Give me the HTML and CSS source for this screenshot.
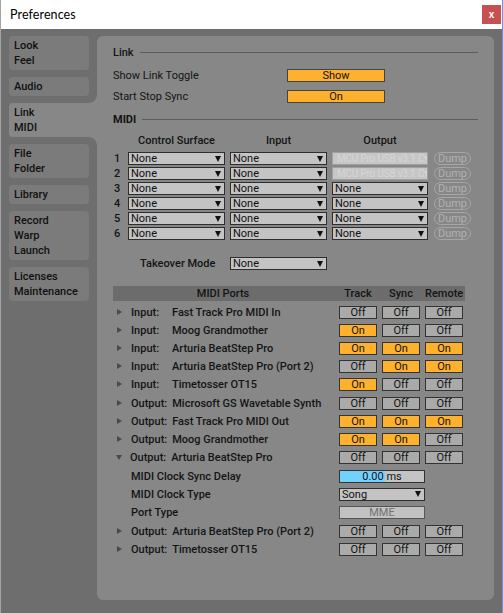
FILE: index.html
```html
<!DOCTYPE html>
<html>
<head>
<meta charset="utf-8">
<title>Preferences</title>
<link rel="stylesheet" href="styles.css">
</head>
<body>
<div class="window">
  <div class="titlebar">
    <span class="title">Preferences</span>
    <span class="close">x</span>
  </div>
  <div class="main">
    <div class="sidebar">
      <div class="tab"><div>Look</div><div>Feel</div></div>
      <div class="tab"><div>Audio</div></div>
      <div class="tab selected"><div>Link</div><div>MIDI</div></div>
      <div class="tab"><div>File</div><div>Folder</div></div>
      <div class="tab"><div>Library</div></div>
      <div class="tab"><div>Record</div><div>Warp</div><div>Launch</div></div>
      <div class="tab"><div>Licenses</div><div>Maintenance</div></div>
    </div>
    <div class="panel">
      <div class="sec-head">Link</div>
      <div class="link-row first">
        <span class="link-label">Show Link Toggle</span>
        <span class="btn on wide">Show</span>
      </div>
      <div class="link-row">
        <span class="link-label">Start Stop Sync</span>
        <span class="btn on wide">On</span>
      </div>
      <div class="sec-head midi-head">MIDI</div>

      <div class="midi-grid heads">
        <span></span>
        <span class="colhead">Control Surface</span>
        <span class="colhead">Input</span>
        <span class="colhead">Output</span>
        <span></span>
      </div>
      <div class="midi-grid row">
        <span class="num">1</span>
        <span class="select"><span>None</span><i class="arrow"></i></span>
        <span class="select"><span>None</span><i class="arrow"></i></span>
        <span class="select disabled"><span>MCU Pro USB v3.1 C</span><i class="arrow"></i></span>
        <span class="dump">Dump</span>
      </div>
      <div class="midi-grid row">
        <span class="num">2</span>
        <span class="select"><span>None</span><i class="arrow"></i></span>
        <span class="select"><span>None</span><i class="arrow"></i></span>
        <span class="select disabled"><span>MCU Pro USB v3.1 C</span><i class="arrow"></i></span>
        <span class="dump">Dump</span>
      </div>
      <div class="midi-grid row">
        <span class="num">3</span>
        <span class="select"><span>None</span><i class="arrow"></i></span>
        <span class="select"><span>None</span><i class="arrow"></i></span>
        <span class="select"><span>None</span><i class="arrow"></i></span>
        <span class="dump">Dump</span>
      </div>
      <div class="midi-grid row">
        <span class="num">4</span>
        <span class="select"><span>None</span><i class="arrow"></i></span>
        <span class="select"><span>None</span><i class="arrow"></i></span>
        <span class="select"><span>None</span><i class="arrow"></i></span>
        <span class="dump">Dump</span>
      </div>
      <div class="midi-grid row">
        <span class="num">5</span>
        <span class="select"><span>None</span><i class="arrow"></i></span>
        <span class="select"><span>None</span><i class="arrow"></i></span>
        <span class="select"><span>None</span><i class="arrow"></i></span>
        <span class="dump">Dump</span>
      </div>
      <div class="midi-grid row">
        <span class="num">6</span>
        <span class="select"><span>None</span><i class="arrow"></i></span>
        <span class="select"><span>None</span><i class="arrow"></i></span>
        <span class="select"><span>None</span><i class="arrow"></i></span>
        <span class="dump">Dump</span>
      </div>

      <div class="midi-grid takeover">
        <span class="takeover-label">Takeover Mode</span>
        <span class="select"><span>None</span><i class="arrow"></i></span>
      </div>

      <div class="ports">
        <div class="ports-grid ports-head">
          <span class="ph-name">MIDI Ports</span>
          <span>Track</span>
          <span>Sync</span>
          <span>Remote</span>
        </div>

        <div class="ports-grid prow first">
          <span class="pname"><i class="tri"></i><span class="plabel">Input:</span>Fast Track Pro MIDI In</span>
          <span class="btn">Off</span><span class="btn">Off</span><span class="btn">Off</span>
        </div>
        <div class="ports-grid prow">
          <span class="pname"><i class="tri"></i><span class="plabel">Input:</span>Moog Grandmother</span>
          <span class="btn on">On</span><span class="btn">Off</span><span class="btn">Off</span>
        </div>
        <div class="ports-grid prow">
          <span class="pname"><i class="tri"></i><span class="plabel">Input:</span>Arturia BeatStep Pro</span>
          <span class="btn on">On</span><span class="btn on">On</span><span class="btn on">On</span>
        </div>
        <div class="ports-grid prow">
          <span class="pname"><i class="tri"></i><span class="plabel">Input:</span>Arturia BeatStep Pro (Port 2)</span>
          <span class="btn">Off</span><span class="btn on">On</span><span class="btn on">On</span>
        </div>
        <div class="ports-grid prow">
          <span class="pname"><i class="tri"></i><span class="plabel">Input:</span>Timetosser OT15</span>
          <span class="btn on">On</span><span class="btn">Off</span><span class="btn">Off</span>
        </div>

        <div class="ports-grid prow gap">
          <span class="pname"><i class="tri"></i><span class="plabel out">Output:</span>Microsoft GS Wavetable Synth</span>
          <span class="btn">Off</span><span class="btn">Off</span><span class="btn">Off</span>
        </div>
        <div class="ports-grid prow">
          <span class="pname"><i class="tri"></i><span class="plabel out">Output:</span>Fast Track Pro MIDI Out</span>
          <span class="btn on">On</span><span class="btn on">On</span><span class="btn on">On</span>
        </div>
        <div class="ports-grid prow">
          <span class="pname"><i class="tri"></i><span class="plabel out">Output:</span>Moog Grandmother</span>
          <span class="btn on">On</span><span class="btn on">On</span><span class="btn">Off</span>
        </div>
        <div class="ports-grid prow">
          <span class="pname"><i class="tri down"></i><span class="plabel out">Output:</span>Arturia BeatStep Pro</span>
          <span class="btn">Off</span><span class="btn">Off</span><span class="btn">Off</span>
        </div>

        <div class="ports-grid prow sub gap">
          <span class="sublabel">MIDI Clock Sync Delay</span>
          <span class="ctl delay">0.00 ms</span>
        </div>
        <div class="ports-grid prow sub">
          <span class="sublabel">MIDI Clock Type</span>
          <span class="ctl select"><span>Song</span><i class="arrow"></i></span>
        </div>
        <div class="ports-grid prow sub">
          <span class="sublabel">Port Type</span>
          <span class="ctl porttype">MME</span>
        </div>

        <div class="ports-grid prow gap">
          <span class="pname"><i class="tri"></i><span class="plabel out">Output:</span>Arturia BeatStep Pro (Port 2)</span>
          <span class="btn">Off</span><span class="btn">Off</span><span class="btn">Off</span>
        </div>
        <div class="ports-grid prow">
          <span class="pname"><i class="tri"></i><span class="plabel out">Output:</span>Timetosser OT15</span>
          <span class="btn">Off</span><span class="btn">Off</span><span class="btn">Off</span>
        </div>
      </div>
    </div>
  </div>
</div>
</body>
</html>
```
FILE: styles.css
```css
* { box-sizing: border-box; }
html, body { margin: 0; padding: 0; }
body {
  width: 503px;
  height: 613px;
  overflow: hidden;
  font-family: Roboto, "Liberation Sans", sans-serif;
  font-size: 11px;
  color: #141414;
}
.window {
  width: 503px;
  height: 613px;
  display: flex;
  flex-direction: column;
  border-left: 1px solid #a3a3a3;
  border-right: 1px solid #8d86c9;
}
.titlebar {
  height: 29px;
  background: #ffffff;
  display: flex;
  align-items: center;
  justify-content: space-between;
  padding-left: 9px;
}
.title {
  font-family: Lato, "Liberation Sans", sans-serif;
  font-size: 12.5px;
  color: #000;
  letter-spacing: 0.1px;
}
.close {
  width: 19px;
  height: 19px;
  margin-right: 1px;
  background: #c75050;
  color: #fff;
  font-family: "Liberation Sans", sans-serif;
  font-weight: bold;
  font-size: 10px;
  display: flex;
  align-items: center;
  justify-content: center;
  padding-bottom: 1px;
}
.main {
  flex: 1;
  background: #6e6e6e;
  display: flex;
  padding: 7px 8px 13px 8px;
}
.sidebar {
  width: 88px;
  display: flex;
  flex-direction: column;
  gap: 7px;
}
.tab {
  width: 80px;
  background: #7b7b7b;
  border-radius: 4px;
  padding: 2px 5px;
  line-height: 15px;
  font-weight: 500;
  color: #111;
}
.tab.selected {
  width: 88px;
  background: #878787;
  border-radius: 4px 0 0 4px;
  position: relative;
}
.tab.selected::before,
.tab.selected::after {
  content: "";
  position: absolute;
  right: 0;
  width: 8px;
  height: 8px;
}
.tab.selected::before {
  top: -8px;
  background: radial-gradient(circle at 0 0, transparent 7.5px, #878787 8px);
}
.tab.selected::after {
  bottom: -8px;
  background: radial-gradient(circle at 0 100%, transparent 7.5px, #878787 8px);
}
.panel {
  flex: 1;
  background: #878787;
  border-radius: 6px;
  padding: 9px 16px 0 16px;
}
.sec-head {
  height: 15px;
  line-height: 15px;
  display: flex;
  align-items: center;
  gap: 6px;
  font-weight: 500;
}
.sec-head::after {
  content: "";
  flex: 1;
  height: 1px;
  background: #5c5c5c;
}
.midi-head { margin-top: 5px; font-weight: bold; }
.link-row {
  height: 21px;
  display: flex;
  align-items: center;
}
.link-row.first { margin-top: 5px; }
.link-label { width: 174px; }
.btn {
  width: 38px;
  height: 13px;
  border: 1px solid #333;
  background: #aaaaaa;
  display: flex;
  align-items: center;
  justify-content: center;
  line-height: 11px;
  color: #111;
}
.btn.on { background: #fdb12d; }
.btn.wide { width: 98px; border-color: #444; }

.midi-grid {
  display: grid;
  grid-template-columns: 10px 97px 97px 96px 38px;
  column-gap: 5px;
  align-items: center;
}
.midi-grid.heads { margin-top: 6px; height: 15px; line-height: 15px; margin-bottom: 3px; }
.colhead { text-align: center; font-weight: 500; }
.midi-grid.row { height: 15px; }
.num { padding-left: 1px; font-weight: 500; }
.select {
  height: 13px;
  background: #c4c4c4;
  border: 1px solid #2e2e2e;
  display: flex;
  align-items: center;
  justify-content: space-between;
  padding: 0 3px 0 2px;
  line-height: 11px;
  color: #111;
  overflow: hidden;
  white-space: nowrap;
}
.arrow {
  width: 0;
  height: 0;
  border-left: 3.5px solid transparent;
  border-right: 3.5px solid transparent;
  border-top: 6px solid #111;
  flex: none;
}
.select.disabled {
  border-color: #a0a0a0;
  background: #c6c6c6;
  color: #d6d6d6;
  font-size: 10px;
  letter-spacing: -0.2px;
  padding-left: 4px;
}
.select.disabled .arrow { border-top-color: #d6d6d6; }
.dump {
  margin-left: 1px;
  height: 13px;
  border: 1px solid #a6a6a6;
  border-radius: 7px;
  color: #b2b2b2;
  display: flex;
  align-items: center;
  justify-content: center;
  line-height: 11px;
}
.midi-grid.takeover { margin-top: 15px; height: 15px; }
.takeover-label { grid-column: 1 / 3; padding-left: 27px; font-weight: 500; }

.ports { width: 352px; margin-top: 15px; }
.ports-grid {
  display: grid;
  grid-template-columns: 221px 38px 38px 38px;
  column-gap: 5px;
  align-items: center;
}
.ports-head {
  height: 15px;
  background: #6c6c6c;
  line-height: 15px;
  text-align: center;
  font-weight: 500;
}
.ph-name { padding-right: 1px; }
.prow { height: 18px; }
.prow.first { margin-top: 2px; }
.prow.gap { margin-top: 1px; }
.pname {
  display: flex;
  align-items: center;
  white-space: nowrap;
  font-weight: 500;
}
.tri {
  margin-left: 4px;
  width: 0;
  height: 0;
  border-top: 3.5px solid transparent;
  border-bottom: 3.5px solid transparent;
  border-left: 5px solid #4a4a4a;
  margin-right: 9px;
  flex: none;
}
.tri.down {
  margin-left: 3px;
  margin-right: 8px;
  border-left: 3.5px solid transparent;
  border-right: 3.5px solid transparent;
  border-top: 5px solid #4a4a4a;
  border-bottom: 0;
}
.plabel { display: inline-block; min-width: 41px; }
.plabel.out { min-width: 0; margin-right: 5px; }
.sublabel { padding-left: 18px; font-weight: 500; white-space: nowrap; }
.ctl { grid-column: 2 / 5; width: 86px; height: 13px; }
.delay {
  border: 1px solid #333;
  background: linear-gradient(to right, #72d1fd 0 45px, #c4c4c4 45px);
  display: flex;
  align-items: center;
  justify-content: center;
  line-height: 11px;
}
.porttype {
  border: 1px solid #555;
  background: #c2c2c2;
  color: #717171;
  display: flex;
  align-items: center;
  justify-content: center;
  line-height: 11px;
}
```
